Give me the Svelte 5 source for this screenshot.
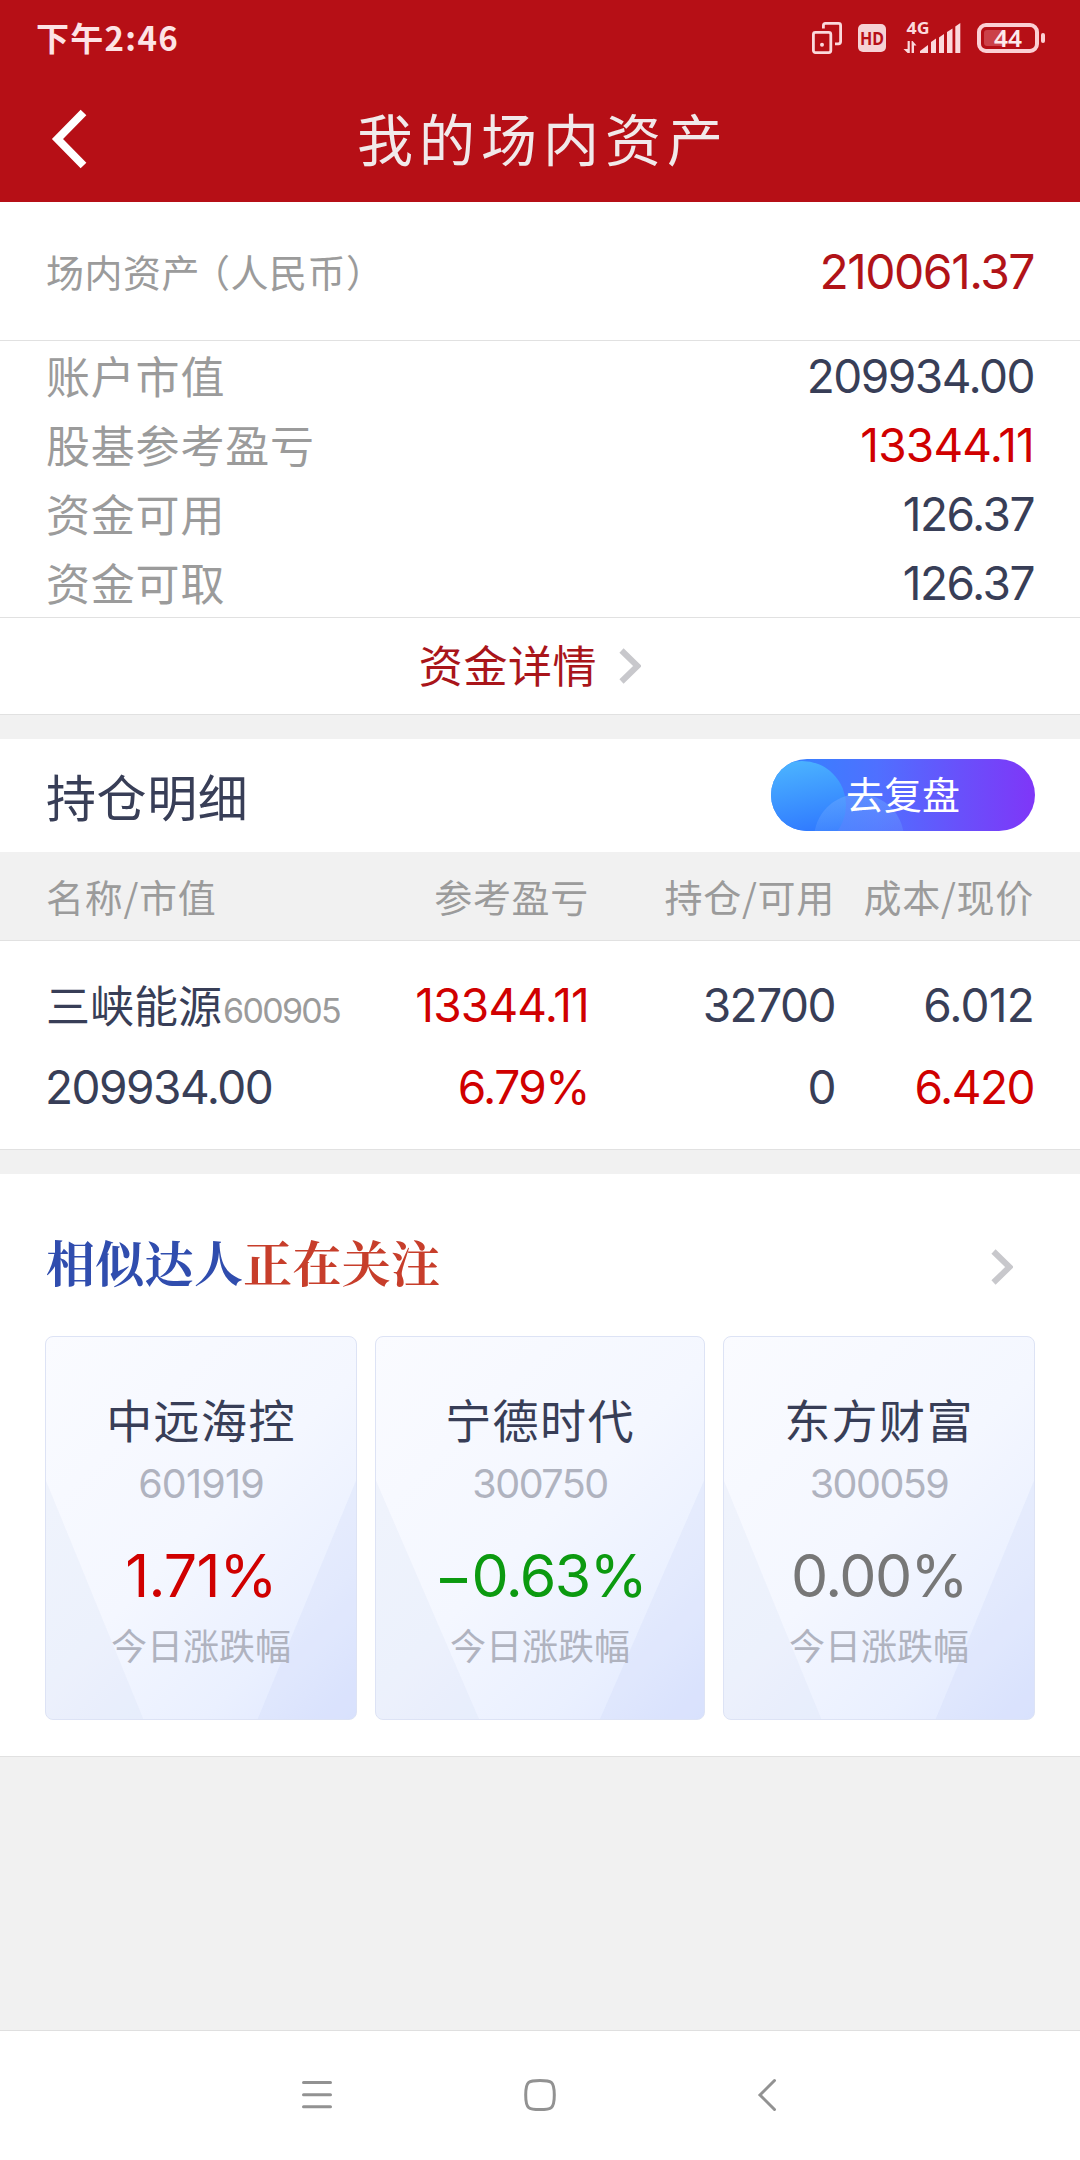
<script lang="ts">
  type Tone = 'dark' | 'rise' | 'fall' | 'flat';

  interface Stock {
    name: string;
    code: string;
    change: string;
    tone: Tone;
  }

  const summary: { label: string; value: string; tone: Tone }[] = [
    { label: '账户市值', value: '209934.00', tone: 'dark' },
    { label: '股基参考盈亏', value: '13344.11', tone: 'rise' },
    { label: '资金可用', value: '126.37', tone: 'dark' },
    { label: '资金可取', value: '126.37', tone: 'dark' }
  ];

  const columns = ['名称/市值', '参考盈亏', '持仓/可用', '成本/现价'];

  const stocks: Stock[] = [
    { name: '中远海控', code: '601919', change: '1.71%', tone: 'rise' },
    { name: '宁德时代', code: '300750', change: '−0.63%', tone: 'fall' },
    { name: '东方财富', code: '300059', change: '0.00%', tone: 'flat' }
  ];

  function isNarrow(value: string): boolean {
    return value.split('1').length > 2;
  }
</script>

{#snippet chevron()}
  <svg class="chevron" width="22" height="36" viewBox="0 0 22 36">
    <path d="M2.5 2.5 L18.5 18 L2.5 33.5" />
  </svg>
{/snippet}

<div class="screen">
  <header>
    <div class="status">
      <span class="time">下午2:46</span>
      <div class="status-icons">
        <svg width="30" height="32" viewBox="0 0 30 32" fill="none" stroke="#fbd9dc" stroke-width="2.8">
          <path d="M11.4 6.5 V3.4 Q11.4 1.4 13.4 1.4 H26.6 Q28.6 1.4 28.6 3.4 V19.6 Q28.6 21.8 26.4 21.8 H23" />
          <rect x="1.4" y="10.4" width="17.4" height="20.2" rx="2" />
          <circle cx="10" cy="22.8" r="2" fill="#fbd9dc" stroke="none" />
        </svg>
        <svg class="hd" width="28" height="28" viewBox="0 0 28 28">
          <rect width="28" height="28" rx="5" fill="#f6d2d5" />
          <text x="14" y="20.8" text-anchor="middle" textLength="24" lengthAdjust="spacingAndGlyphs">HD</text>
        </svg>
        <svg class="signal" width="58" height="32" viewBox="0 0 58 32" fill="#fbd9dc">
          <text x="3.5" y="11.6" textLength="23" lengthAdjust="spacingAndGlyphs">4G</text>
          <path d="M6.8 31 V19 H4.6 V27 L0.5 27 L4.6 31 Z" />
          <path d="M8.6 31 V19 H9.6 L13.5 23.5 H11 V31 Z" />
          <path d="M17 31 V29 L25 23 V31 Z" />
          <path d="M28 31 V20 L33 16.5 V31 Z" />
          <path d="M36 31 V15.5 L41 12 V31 Z" />
          <path d="M44 31 V10 L49.5 6.5 V31 Z" />
          <path d="M52.3 31 V4.5 L57.3 1 V31 Z" />
        </svg>
        <svg class="battery" width="68" height="30" viewBox="0 0 68 30">
          <rect x="2" y="2" width="58" height="26" rx="7" fill="none" stroke="#fbd0d4" stroke-width="4" />
          <rect x="7" y="7" width="22" height="16" rx="3" fill="#cb4149" />
          <rect x="64" y="10" width="4" height="10" rx="2" fill="#fbd0d4" />
          <text x="31" y="23.8" text-anchor="middle" textLength="28" lengthAdjust="spacingAndGlyphs">44</text>
        </svg>
      </div>
    </div>
    <div class="titlebar">
      <svg class="back" width="36" height="60" viewBox="0 0 36 60">
        <path d="M32.5 3.5 L6.5 30 L32.5 56.5" />
      </svg>
      <h1>我的场内资产</h1>
    </div>
  </header>

  <section class="total">
    <span class="label">场内资产<span class="paren">（</span>人民币）</span>
    <span class="num">210061.37</span>
  </section>

  <section class="summary">
    {#each summary as item}
      <div class="line">
        <span>{item.label}</span>
        <span class="num {item.tone}" class:loose={isNarrow(item.value)}>{item.value}</span>
      </div>
    {/each}
  </section>

  <section class="detail">
    <span>资金详情</span>
    {@render chevron()}
  </section>

  <section class="holdings">
    <div class="holdings-head">
      <h2>持仓明细</h2>
      <button>
        <svg width="264" height="72" viewBox="0 0 264 72">
          <defs>
            <linearGradient id="pill" x1="0" x2="1" y1="0" y2="0">
              <stop offset="0" stop-color="#2f86ff" />
              <stop offset="0.4" stop-color="#4f70ff" />
              <stop offset="0.72" stop-color="#6950fb" />
              <stop offset="1" stop-color="#7f36f8" />
            </linearGradient>
            <linearGradient id="bubble" x1="0.4" x2="0.6" y1="0" y2="1">
              <stop offset="0" stop-color="#4bb3ff" />
              <stop offset="0.85" stop-color="#2f78ff" />
            </linearGradient>
            <linearGradient id="ripple" x1="0" x2="0" y1="0" y2="1">
              <stop offset="0" stop-color="#6ea8ff" stop-opacity="0.5" />
              <stop offset="0.5" stop-color="#6ea8ff" stop-opacity="0.2" />
            </linearGradient>
            <clipPath id="pill-clip"><rect width="264" height="72" rx="36" /></clipPath>
          </defs>
          <g clip-path="url(#pill-clip)">
            <rect width="264" height="72" fill="url(#pill)" />
            <circle cx="31" cy="46" r="44" fill="url(#bubble)" />
            <circle cx="88" cy="80" r="45" fill="url(#ripple)" />
          </g>
        </svg>
        <span>去复盘</span>
      </button>
    </div>
    <div class="grid thead">
      {#each columns as column}
        <span>{column}</span>
      {/each}
    </div>
    <div class="tbody">
      <div class="grid">
        <span class="stock">三峡能源<small class="num">600905</small></span>
        <span class="num rise loose">13344.11</span>
        <span class="num">32700</span>
        <span class="num loose">6.012</span>
      </div>
      <div class="grid">
        <span class="num">209934.00</span>
        <span class="num rise">6.79%</span>
        <span class="num">0</span>
        <span class="num rise">6.420</span>
      </div>
    </div>
  </section>

  <section class="similar">
    <div class="similar-head">
      <h3>相似达人<em>正在关注</em></h3>
      {@render chevron()}
    </div>
    <div class="cards">
      {#each stocks as stock}
        <div class="card">
          <svg class="facets" viewBox="0 0 100 100" preserveAspectRatio="none">
            <polygon points="0,37.6 31.4,100 0,100" fill="#c8d2ee" fill-opacity="0.16" />
            <polygon points="100,37.6 68.3,100 100,100" fill="#b9c9f0" fill-opacity="0.16" />
          </svg>
          <div class="name">{stock.name}</div>
          <div class="code num" class:loose={isNarrow(stock.code)}>{stock.code}</div>
          <div class="change num {stock.tone}" class:loose={isNarrow(stock.change)}>{stock.change}</div>
          <div class="caption">今日涨跌幅</div>
        </div>
      {/each}
    </div>
  </section>

  <nav>
    <svg width="32" height="34" viewBox="0 0 32 34">
      <path d="M2.5 4.6 H29.5 M2.5 16.8 H29.5 M2.5 28.8 H29.5" />
    </svg>
    <svg width="34" height="34" viewBox="0 0 34 34">
      <path d="M17 2.5 C28 2.5 31.3 2.8 31.3 17 C31.3 31.2 28 31.5 17 31.5 C6 31.5 2.7 31.2 2.7 17 C2.7 2.8 6 2.5 17 2.5 Z" />
    </svg>
    <svg class="nav-back" width="20" height="34" viewBox="0 0 20 34">
      <path d="M17.5 2.5 L3 17 L17.5 31.5" />
    </svg>
  </nav>
</div>

<style>
  :global(body) {
    background: #f1f1f1;
  }

  .screen {
    display: flex;
    flex-direction: column;
    width: 1080px;
    height: 2160px;
    overflow: hidden;
    background: #f1f1f1;
    color: #383e57;
    font-family: 'Noto Sans CJK SC', sans-serif;
    font-size: 44px;
    line-height: 1;
  }

  h1, h2, h3 {
    margin: 0;
    font-weight: 400;
  }

  section {
    box-sizing: border-box;
    background: #fff;
    border-bottom: 1px solid #e1e1e1;
  }

  .num {
    font-family: Inter, 'Noto Sans CJK SC', sans-serif;
    font-size: 46px;
    letter-spacing: -1.5px;
  }

  .num.loose {
    letter-spacing: -0.8px;
  }

  .rise { color: #d00000; }
  .fall { color: #0c9a10; }
  .flat { color: #777; }

  header {
    height: 202px;
    background: #b60f16;
  }

  .status {
    display: flex;
    justify-content: space-between;
    align-items: center;
    height: 76px;
    padding: 0 35px 0 36px;
  }

  .time {
    padding-bottom: 1px;
    color: #fde3e5;
    font-size: 33px;
    font-weight: 700;
    letter-spacing: 1.3px;
  }

  .status-icons {
    display: flex;
    align-items: center;
    gap: 16px;
  }

  .status-icons svg {
    overflow: visible;
  }

  .status-icons text {
    font-family: 'Noto Sans', sans-serif;
    font-weight: 700;
  }

  .hd text {
    fill: #b60f16;
    font-size: 18px;
  }

  .signal text {
    font-size: 16px;
  }

  .signal {
    margin-left: 1px;
  }

  .battery text {
    fill: #fdeaec;
    font-size: 23px;
    font-weight: 600;
  }

  .titlebar {
    display: flex;
    align-items: center;
    height: 126px;
    padding: 0 51px;
  }

  .back {
    flex: none;
  }

  .back path {
    fill: none;
    stroke: #fff;
    stroke-width: 8;
  }

  h1 {
    flex: 1;
    margin-right: 30px;
    padding-bottom: 4px;
    color: #f1e9ea;
    font-size: 56px;
    letter-spacing: 6px;
    text-align: center;
  }

  .total {
    display: flex;
    justify-content: space-between;
    align-items: center;
    height: 139px;
    padding: 0 46px;
  }

  .total .label {
    padding-bottom: 1px;
    color: #9b9b9b;
    font-size: 38px;
    letter-spacing: 0.5px;
  }

  .paren {
    display: inline-block;
    margin-left: 11px;
    font-feature-settings: 'halt';
  }

  .total .num {
    padding-top: 2px;
    color: #b11318;
    font-size: 48px;
  }

  .summary {
    height: 277px;
  }

  .line {
    display: flex;
    justify-content: space-between;
    align-items: center;
    height: 69px;
    padding: 0 46px;
    color: #9b9b9b;
    letter-spacing: 0.8px;
  }

  .line > :first-child {
    padding-bottom: 2px;
  }

  .line .dark {
    color: #383e57;
  }

  .detail {
    display: flex;
    justify-content: center;
    align-items: center;
    gap: 22px;
    height: 97px;
    padding-right: 20px;
    color: #a9151a;
    letter-spacing: 0.6px;
  }

  .detail span {
    padding-bottom: 5px;
  }

  .chevron path {
    fill: none;
    stroke: #c8c8cc;
    stroke-width: 6;
  }

  .holdings {
    margin-top: 24px;
  }

  .holdings-head {
    display: flex;
    justify-content: space-between;
    align-items: center;
    height: 113px;
    padding: 0 45px 2px 46px;
    box-sizing: border-box;
  }

  h2 {
    font-size: 50px;
    letter-spacing: 0.6px;
  }

  button {
    display: grid;
    place-items: center;
    width: 264px;
    height: 72px;
    padding: 0;
    border: 0;
    background: none;
    color: #fff;
    font: 38px/1 'Noto Sans CJK SC', sans-serif;
  }

  button > * {
    grid-area: 1 / 1;
  }

  button span {
    padding-bottom: 3px;
  }

  .grid {
    display: grid;
    grid-template-columns: 321px 222px 246px 199px;
    align-items: center;
    padding: 0 46px;
    text-align: right;
    white-space: nowrap;
  }

  .grid > :first-child {
    text-align: left;
  }

  .thead {
    height: 88px;
    border-bottom: 1px solid #e1e1e1;
    background: #f1f1f1;
    color: #9b9b9b;
    font-size: 38px;
    letter-spacing: 0.7px;
  }

  .tbody {
    padding: 23px 0 21px;
  }

  .tbody .grid {
    height: 82px;
  }

  .tbody .grid > .num:first-child {
    margin-left: -1px;
  }

  .stock {
    padding-bottom: 1px;
  }

  .stock small {
    margin-left: 1px;
    color: #9b9b9b;
    font-size: 34px;
    letter-spacing: -1.7px;
  }

  .similar {
    height: 583px;
    margin-top: 24px;
    padding: 0 45px;
  }

  .similar-head {
    display: flex;
    justify-content: space-between;
    align-items: center;
    height: 162px;
    padding: 24px 22px 0 1px;
    box-sizing: border-box;
  }

  h3 {
    padding-bottom: 12px;
    color: #304dae;
    font-family: 'Noto Serif CJK SC', 'Source Han Serif SC', 'Liberation Serif', serif;
    font-size: 49px;
    font-weight: 700;
    letter-spacing: 0.3px;
  }

  h3 em {
    color: #c73e2b;
    font-style: normal;
  }

  .cards {
    display: grid;
    grid-template-columns: 312px 330px 312px;
    gap: 18px;
  }

  .card {
    position: relative;
    box-sizing: border-box;
    height: 384px;
    padding-top: 58px;
    overflow: hidden;
    border: 1px solid #dde3f5;
    border-radius: 8px;
    background: linear-gradient(135deg, #fafbff 0%, #f4f7ff 50%, #eaf0ff 78%, #dee6ff 100%);
    text-align: center;
  }

  .facets {
    position: absolute;
    inset: 0;
    width: 100%;
    height: 100%;
  }

  .card div {
    position: relative;
  }

  .name {
    font-size: 46px;
    letter-spacing: 1.4px;
  }

  .code {
    margin-top: 24px;
    color: #b0b3bf;
    font-size: 39.5px;
  }

  .change {
    margin-top: 41px;
    font-size: 59px;
  }

  .caption {
    margin-top: 21px;
    color: #b0b3bf;
    font-size: 36px;
  }

  nav {
    display: flex;
    justify-content: center;
    align-items: center;
    gap: 190px;
    box-sizing: border-box;
    height: 130px;
    margin-top: auto;
    padding: 0 2px 2px 0;
    border-top: 1px solid #dfdfdf;
    background: #fff;
  }

  .nav-back {
    margin-left: 10px;
  }

  nav path {
    fill: none;
    stroke: #929292;
    stroke-width: 3;
    stroke-linecap: round;
  }
</style>
